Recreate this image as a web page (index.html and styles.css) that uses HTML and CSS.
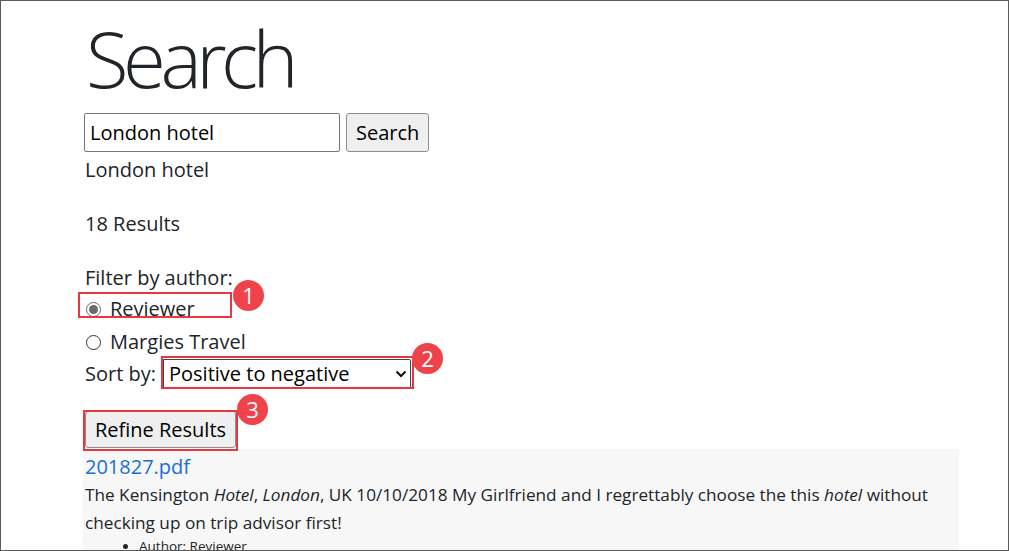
FILE: index.html
```html
<!DOCTYPE html>
<html lang="en">
<head>
<meta charset="utf-8">
<title>Search</title>
<link rel="stylesheet" href="styles.css">
</head>
<body>
<div class="frame">
  <main class="page">
    <h1 class="title">Search</h1>
    <form class="search-row">
      <input class="search-input" type="text" value="London hotel">
      <button class="btn" type="button">Search</button>
    </form>
    <div class="line echo">London hotel</div>
    <p class="line gap">18 Results</p>
    <div class="line gap">Filter by author:</div>
    <div class="radio-row first"><span class="radio checked"></span>Reviewer</div>
    <div class="radio-row second"><span class="radio"></span>Margies Travel</div>
    <div class="sort-row">
      <span>Sort by:</span>
      <div class="select">
        <span>Positive to negative</span>
        <svg class="chev" width="12" height="8" viewBox="0 0 12 8"><path d="M1.5 1.5 L6 6 L10.5 1.5" fill="none" stroke="#111" stroke-width="2"/></svg>
      </div>
    </div>
    <button class="btn refine" type="button">Refine Results</button>
    <section class="results">
      <a class="doc-link" href="#">201827.pdf</a>
      <p class="snippet">The Kensington <em>Hotel</em>, <em>London</em>, UK 10/10/2018 My Girlfriend and I regrettably choose the this <em>hotel</em> without checking up on trip advisor first!</p>
      <ul class="meta">
        <li>Author: Reviewer</li>
      </ul>
    </section>
  </main>

  <div class="mark mark1"></div>
  <div class="mark mark2"></div>
  <div class="mark mark3"></div>
  <div class="badge badge1">1</div>
  <div class="badge badge2">2</div>
  <div class="badge badge3">3</div>
</div>
</body>
</html>
```

FILE: styles.css
```css
* { box-sizing: border-box; }
html, body { margin: 0; padding: 0; background: #fff; }
body {
  font-family: "Open Sans", "Noto Sans", "Liberation Sans", sans-serif;
  color: #212529;
}
.frame {
  position: relative;
  width: 1009px;
  height: 551px;
  border: 1px solid #5a5a5a;
  overflow: hidden;
  background: #fff;
}
.page {
  padding: 10px 0 0 84px;
}
.title {
  margin: 0 0 8px 0;
  font-size: 78px;
  font-weight: 300;
  line-height: 94px;
  letter-spacing: -5.5px;
  margin-left: 1px;
}
.search-row {
  display: flex;
  gap: 6px;
  margin: 0;
  margin-left: -1px;
}
.search-input {
  width: 256px;
  height: 39px;
  border: 1px solid #767676;
  border-radius: 2px;
  padding: 0 5px;
  font-family: inherit;
  font-size: 20px;
  color: #000;
  outline: none;
}
.btn {
  height: 39px;
  padding: 0 9px;
  background: #efefef;
  border: 1px solid #8f8f8f;
  border-radius: 3px;
  font-family: inherit;
  font-size: 20px;
  color: #000;
}
.line {
  margin: 0;
  font-size: 20px;
  line-height: 30px;
}
.echo { margin-top: 3px; }
.gap { margin-top: 24px; }
.radio-row {
  display: flex;
  font-size: 20px;
  line-height: 30px;
  align-items: flex-start;
}
.radio-row.first { height: 34px; padding-top: 1px; }
.radio-row.second { height: 32px; }
.radio {
  width: 15px;
  height: 15px;
  border: 1px solid #333;
  border-radius: 50%;
  margin: 8px 9px 0 1px;
  display: flex;
  align-items: center;
  justify-content: center;
}
.radio.checked { border: 1.5px solid #6b6b6b; }
.radio.checked::after {
  content: "";
  width: 9px;
  height: 9px;
  border-radius: 50%;
  background: #6b6b6b;
}
.sort-row {
  display: flex;
  align-items: center;
  gap: 6px;
  font-size: 20px;
  line-height: 30px;
  height: 30px;
}
.select {
  width: 249px;
  height: 30px;
  border: 1px solid #444;
  border-left-width: 2px;
  border-radius: 2px;
  display: flex;
  align-items: center;
  justify-content: space-between;
  padding: 0 3px 0 5px;
  color: #000;
}
.chev { display: block; }
.refine {
  margin-top: 22px;
  height: 37px;
  width: 151px;
  padding: 0;
  display: block;
}
.results {
  width: 876px;
  margin-left: -2px;
  margin-top: 1px;
  padding: 4px 0 0 2px;
  background: #f7f7f7;
  height: 120px;
}
.doc-link {
  display: block;
  font-size: 20px;
  line-height: 28px;
  color: #1a6fd6;
  text-decoration: none;
}
.snippet {
  margin: 0;
  font-size: 17.2px;
  line-height: 27.5px;
}
.meta {
  margin: 0;
  padding-left: 54px;
  font-size: 13.5px;
  line-height: 20px;
}
.mark {
  position: absolute;
  border: 2px solid #e8373f;
}
.mark1 { left: 77px; top: 291px; width: 154px; height: 26px; }
.mark2 { left: 160px; top: 355px; width: 253px; height: 33px; }
.mark3 { left: 82px; top: 409px; width: 155px; height: 41px; }
.badge {
  position: absolute;
  width: 31px;
  height: 31px;
  border-radius: 50%;
  background: #ef434b;
  color: #fff;
  font-size: 22px;
  line-height: 31px;
  text-align: center;
}
.badge1 { left: 232px; top: 279px; }
.badge2 { left: 411px; top: 342px; }
.badge3 { left: 236px; top: 393px; }
```
